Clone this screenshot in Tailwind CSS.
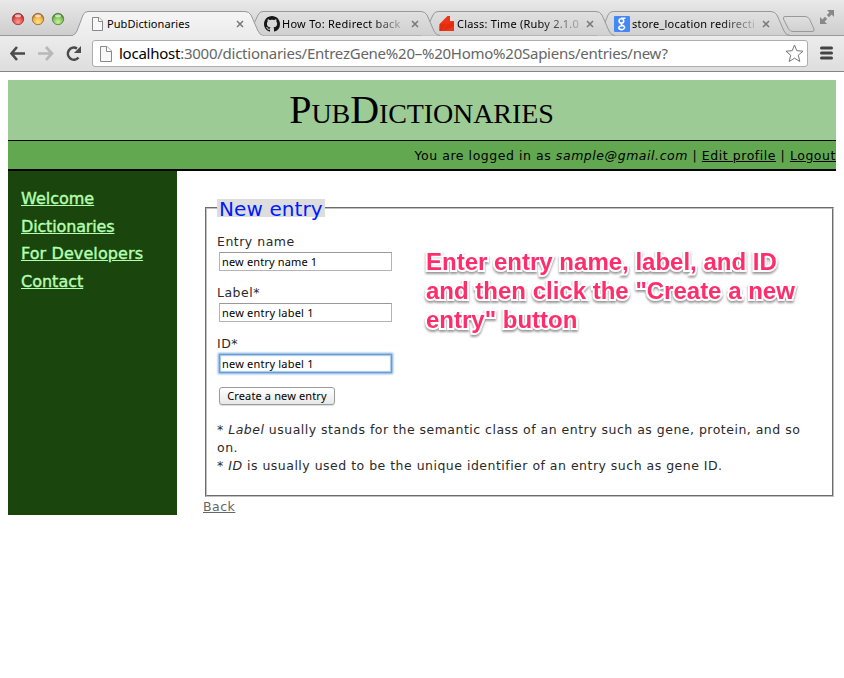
<!DOCTYPE html>
<html lang="en">
<head>
<meta charset="utf-8">
<title>PubDictionaries</title>
<script src="https://cdn.jsdelivr.net/npm/@tailwindcss/browser@4"></script>
</head>
<body class="w-[844px] h-[678px] overflow-hidden bg-white font-['DejaVu_Sans',sans-serif] text-[#2a2a2a]">
<!-- Browser chrome -->
<div class="h-[72px] border-b border-[#858585] bg-[#e7e7e7] font-['Noto_Sans',sans-serif] text-black">
  <div class="relative h-[36px] bg-linear-to-b from-[#e9e9e9] to-[#cdcdcd]">
    <svg class="absolute inset-0" width="844" height="36" viewBox="0 0 844 36" fill="none">
      <defs>
        <linearGradient id="tab" x1="0" y1="0" x2="0" y2="1"><stop stop-color="#e0e0e0"/><stop offset="1" stop-color="#d0d0d0"/></linearGradient>
        <linearGradient id="act" x1="0" y1="0" x2="0" y2="1"><stop stop-color="#f5f5f5"/><stop offset="1" stop-color="#ececec"/></linearGradient>
        <radialGradient id="r" cx=".5" cy=".75" r=".7"><stop stop-color="#ff9c94"/><stop offset=".65" stop-color="#e04a46"/><stop offset="1" stop-color="#9d2423"/></radialGradient>
        <radialGradient id="y" cx=".5" cy=".75" r=".7"><stop stop-color="#ffe887"/><stop offset=".65" stop-color="#efae42"/><stop offset="1" stop-color="#9c641a"/></radialGradient>
        <radialGradient id="g" cx=".5" cy=".75" r=".7"><stop stop-color="#caf29c"/><stop offset=".65" stop-color="#7fbf56"/><stop offset="1" stop-color="#3c7926"/></radialGradient>
      </defs>
      <path d="M0 35.5H844" stroke="#999"/>
      <g fill="url(#tab)" stroke="#999">
        <path d="M596 35.5Q600 35 602 30L608 15Q609.500 11.500 613 11.500H771Q775 11.500 777 15L784 31Q786 35.500 790 35.500"/>
        <path d="M420 35.500Q424 35 426 30L433 15Q434.500 11.500 438 11.500H596Q600 11.500 602 15L609 31Q611 35.500 615 35.500"/>
        <path d="M245 35.500Q249 35 251 30L258 15Q259.500 11.500 263 11.500H421Q425 11.500 427 15L434 31Q436 35.500 440 35.500"/>
        <path d="M785 16.500H805Q808 16.500 809.500 19L814 29Q815 31.500 812 31.500H793Q790 31.500 788.500 29L783.500 19Q783 16.500 785 16.500Z"/>
      </g>
      <path d="M71 36Q75 35.500 77 31L83 15Q84.500 11.500 88 11.500H245Q249 11.500 251 15L258 31Q260 35.500 264 36" fill="url(#act)" stroke="#999"/>
      <path d="M73 36.500H263" stroke="#ececec" stroke-width="2"/>
      <g stroke-width=".8">
        <circle cx="18" cy="19" r="5.700" fill="url(#r)" stroke="#96322f"/>
        <circle cx="38" cy="19" r="5.700" fill="url(#y)" stroke="#94652a"/>
        <circle cx="58" cy="19" r="5.700" fill="url(#g)" stroke="#4b7d38"/>
      </g>
      <g fill="#fff" opacity=".65"><ellipse cx="18" cy="15.700" rx="3" ry="1.500"/><ellipse cx="38" cy="15.700" rx="3" ry="1.500"/><ellipse cx="58" cy="15.700" rx="3" ry="1.500"/></g>
      <g fill="#888"><path d="M827 10H834V17L831.600 14.600L829 17.200L826.800 15L829.400 12.400Z"/><path d="M820 24V17L822.400 19.400L825 16.800L827.200 19L824.600 21.600L827 24Z"/></g>
    </svg>
    <div class="relative flex h-[36px] pt-[12px] pl-[92px] text-[11px] leading-[24px] whitespace-nowrap">
      <div class="flex w-[172px]">
        <svg class="mt-[5px] mr-[4px]" width="11" height="14" viewBox="0 0 11 14"><path d="M.5.500H7L10.500 4V13.500H.5Z" fill="#f8f8f8" stroke="#888"/><path d="M6.500.500V4.500H10.500" fill="#fff" stroke="#888"/></svg>
        <span class="w-[129px] tracking-[0.08px]">PubDictionaries</span>
        <svg class="mt-[8px]" width="8" height="8" viewBox="0 0 8 8"><path d="M1 1L7 7M7 1L1 7" stroke="#777" stroke-width="1.500"/></svg>
      </div>
      <div class="flex w-[175px]">
        <svg class="mt-[4px] mr-[2px]" width="16" height="16" viewBox="0 0 16 16"><path fill="#161616" d="M8 0C3.580 0 0 3.580 0 8c0 3.540 2.290 6.530 5.470 7.590.4.070.55-.17.55-.38 0-.19-.01-.82-.01-1.490-2.010.37-2.530-.49-2.690-.94-.09-.23-.48-.94-.82-1.130-.28-.15-.68-.52-.01-.53.63-.01 1.080.58 1.230.82.72 1.210 1.870.87 2.330.66.07-.52.28-.87.51-1.070-1.780-.2-3.640-.89-3.640-3.950 0-.87.31-1.590.82-2.150-.08-.2-.36-1.020.08-2.120 0 0 .67-.21 2.200.82.64-.18 1.320-.27 2-.27s1.360.09 2 .27c1.530-1.040 2.200-.82 2.200-.82.44 1.100.16 1.920.08 2.120.51.56.82 1.270.82 2.150 0 3.070-1.870 3.750-3.650 3.950.29.25.54.73.54 1.480 0 1.070-.01 1.930-.01 2.200 0 .21.15.46.55.38A8.010 8.010 0 0 0 16 8c0-4.420-3.580-8-8-8"/></svg>
        <span class="w-[129px]"><span class="block w-[121px] tracking-[0.26px] bg-linear-to-r from-black from-75% to-black/15 bg-clip-text text-transparent">How To: Redirect back</span></span>
        <svg class="mt-[8px]" width="8" height="8" viewBox="0 0 8 8"><path d="M1 1L7 7M7 1L1 7" stroke="#777" stroke-width="1.500"/></svg>
      </div>
      <div class="flex w-[175px]">
        <svg class="mt-[4px] mr-[2px]" width="16" height="16" viewBox="0 0 16 16"><path d="M1 7.500L8.500 0H11V5H15V15H.5V12Z" fill="#ef3517"/><path d="M.5 8L7 7.500L3 15H.5ZM8 8L15 6V10L4 15Z" fill="#e22c0e"/><path d="M11 0L15 5H11Z" fill="#f9dcd6"/></svg>
        <span class="w-[129px]"><span class="block w-[125px] tracking-[0.2px] bg-linear-to-r from-black from-65% to-black/15 bg-clip-text text-transparent">Class: Time (Ruby 2.1.0</span></span>
        <svg class="mt-[8px]" width="8" height="8" viewBox="0 0 8 8"><path d="M1 1L7 7M7 1L1 7" stroke="#777" stroke-width="1.500"/></svg>
      </div>
      <div class="flex">
        <svg class="mt-[4px] mr-[2px]" width="16" height="16" viewBox="0 0 16 16"><rect width="16" height="16" rx="1" fill="#4587f4"/><g fill="none" stroke="#fff" stroke-width="1.600"><ellipse cx="7.400" cy="4.900" rx="2.300" ry="2.200"/><path d="M7 2.300H11.500M8 7.200Q6.300 8.200 8.300 9.200Q11 10.300 10.500 12Q9.600 13.800 7.300 13.600Q4.500 13.200 4.800 11.300Q5.500 9.600 8.800 9.700"/></g></svg>
        <span class="w-[130px]"><span class="block w-[125px] tracking-[0.2px] bg-linear-to-r from-black from-70% to-black/10 bg-clip-text text-transparent">store_location redirecti</span></span>
        <svg class="mt-[8px]" width="8" height="8" viewBox="0 0 8 8"><path d="M1 1L7 7M7 1L1 7" stroke="#777" stroke-width="1.500"/></svg>
      </div>
    </div>
  </div>
  <div class="flex h-[35px] items-start bg-linear-to-b from-[#ececec] to-[#dedede] pt-[4px] pl-[10px]">
    <svg width="82" height="28" viewBox="0 0 82 28" fill="none"><g stroke-width="2.600"><path d="M7 7L1.500 13.500L7 20M2 13.500H15" stroke="#4a4a4a"/><path d="M36 7L42 13.500L36 20M41.500 13.500H28" stroke="#b8b8b8"/><path d="M68.500 17.500A6 6 0 1 1 67 8.500" stroke="#4a4a4a"/></g><path d="M71 6V13H64Z" fill="#4a4a4a"/></svg>
    <div class="flex h-[27px] w-[716px] rounded-[3px] border border-[#adadad] bg-white pl-[7px]">
      <svg class="mt-[5px] mr-[7px]" width="12" height="16" viewBox="0 0 12 16"><path d="M.5.500H7L11.500 5V15.500H.5Z" fill="#f8f8f8" stroke="#888"/><path d="M6.500.500V5.500H11.500" fill="#fff" stroke="#888"/></svg>
      <div class="w-[568px] whitespace-nowrap text-[15px] leading-[25px] tracking-[-0.25px] text-[#666]"><span class="text-black">localhost</span>:3000/dictionaries/EntrezGene%20–%20Homo%20Sapiens/entries/new?</div>
      <svg class="mt-[3px] ml-[98px] shrink-0" width="19" height="19" viewBox="0 0 19 19"><path d="M9.500 1L11.800 6.700L18 7.200L13.300 11.200L14.800 17.500L9.500 14.200L4.200 17.500L5.700 11.200L1 7.200L7.200 6.700Z" fill="#fff" stroke="#777" stroke-linejoin="round"/></svg>
    </div>
    <svg class="mt-[6px] ml-[12px]" width="13" height="14" viewBox="0 0 13 14"><path d="M1.500 2H11.500M1.500 7H11.500M1.500 12H11.500" stroke="#444" stroke-width="3" stroke-linecap="round"/></svg>
  </div>
</div>
<!-- Page -->
<div class="mx-[8px] mt-[8px]">
  <h1 class="h-[61px] border-b border-black bg-[#9ccb95] pr-[1px] text-center font-['Liberation_Serif',serif] text-[40px] leading-[59px] tracking-[-0.1px] text-black [font-variant:small-caps]">PubDictionaries</h1>
  <div class="h-[30px] border-b-2 border-black bg-[#61a850] text-right text-[12.500px] leading-[30px] tracking-[0.55px] whitespace-nowrap text-black">You are logged in as <i>sample@gmail.com</i> | <a class="underline">Edit profile</a> | <a class="underline">Logout</a></div>
  <div class="flex">
    <nav class="flex h-[344px] w-[169px] flex-col bg-[#1a450c] pt-[14px] pl-[13px] text-[16px] leading-[27.600px] text-[#b4ffaf] [-webkit-text-stroke:0.4px_#b4ffaf]">
      <a class="underline">Welcome</a><a class="underline tracking-[-0.15px]">Dictionaries</a><a class="underline tracking-[0.1px]">For Developers</a><a class="underline">Contact</a>
    </nav>
    <main class="w-[659px] pt-[28px] pl-[26px] text-[12.500px] leading-[18px] tracking-[0.5px]">
      <fieldset class="ml-[2px] h-[298px] w-[629px] border-2 border-[#c0c0c0] pl-[10px] [border-style:groove]">
        <legend class="h-[18px] w-[108px] bg-[#ddd] pl-[2px] text-[20px] leading-[20px] tracking-[0.1px] whitespace-nowrap text-[#0019ff]">New entry</legend>
        <div class="flex">
          <div class="w-[209px] pt-[16px]">
            <div class="h-[51px]"><label class="block h-[19px]">Entry name</label><div class="ml-[2px] h-[19px] w-[173px] border border-[#b4b4b4] border-t-[#999] pl-[2px] font-['Noto_Sans',sans-serif] text-[11px] leading-[18px] tracking-[0.15px] text-black">new entry name 1</div></div>
            <div class="h-[51px]"><label class="block h-[19px]">Label*</label><div class="ml-[2px] h-[19px] w-[173px] border border-[#b4b4b4] border-t-[#999] pl-[2px] font-['Noto_Sans',sans-serif] text-[11px] leading-[18px] tracking-[0.2px] text-black">new entry label 1</div></div>
            <div class="h-[52px]"><label class="block h-[19px]">ID*</label><div class="ml-[2px] h-[19px] w-[173px] border border-[#6c9dce] pl-[2px] font-['Noto_Sans',sans-serif] text-[11px] leading-[18px] tracking-[0.2px] text-black shadow-[0_0_2px_1px_#78a9df,inset_0_0_1px_1px_#a5c8ea]">new entry label 1</div></div>
            <button class="ml-[2px] block h-[18px] w-[116px] rounded-[3px] border border-[#9b9b9b] bg-linear-to-b from-white to-[#e8e8e8] font-['Noto_Sans',sans-serif] text-[11px] leading-[16px] tracking-[0.13px] whitespace-nowrap text-black shadow-[0_1px_1px_#ddd]">Create a new entry</button>
          </div>
          <p class="mt-[30px] w-[400px] font-['Liberation_Sans',sans-serif] text-[24px] leading-[29px] font-bold tracking-normal whitespace-nowrap text-[#ff2d6b] [paint-order:stroke_fill] [-webkit-text-stroke:4px_white] [filter:drop-shadow(0_2px_1px_rgba(0,0,0,.4))]">Enter entry name, label, and ID<br>and then click the "Create a new<br>entry" button</p>
        </div>
        <p class="mt-[16px] tracking-[0.49px] whitespace-nowrap">* <i>Label</i> usually stands for the semantic class of an entry such as gene, protein, and so<br>on.<br>* <i>ID</i> is usually used to be the unique identifier of an entry such as gene ID.</p>
      </fieldset>
      <a class="mt-[1px] block text-[#666] underline">Back</a>
    </main>
  </div>
</div>
</body>
</html>
